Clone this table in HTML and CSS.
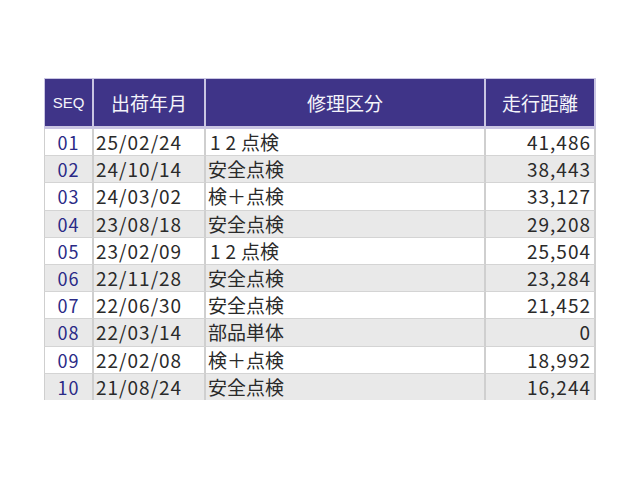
FILE: index.html
```html
<!DOCTYPE html>
<html lang="ja">
<head>
<meta charset="utf-8">
<link rel="stylesheet" href="styles.css">
</head>
<body>
<table class="list">
  <colgroup>
    <col class="c-seq"><col class="c-date"><col class="c-kind"><col class="c-dist">
  </colgroup>
  <thead>
    <tr>
      <th class="h-seq">SEQ</th>
      <th>出荷年月</th>
      <th>修理区分</th>
      <th>走行距離</th>
    </tr>
  </thead>
  <tbody>
    <tr><td class="seq">01</td><td class="date">25/02/24</td><td><span class="wide">12</span>点検</td><td class="num">41,486</td></tr>
    <tr class="alt"><td class="seq">02</td><td class="date">24/10/14</td><td>安全点検</td><td class="num">38,443</td></tr>
    <tr><td class="seq">03</td><td class="date">24/03/02</td><td>検＋点検</td><td class="num">33,127</td></tr>
    <tr class="alt"><td class="seq">04</td><td class="date">23/08/18</td><td>安全点検</td><td class="num">29,208</td></tr>
    <tr><td class="seq">05</td><td class="date">23/02/09</td><td><span class="wide">12</span>点検</td><td class="num">25,504</td></tr>
    <tr class="alt"><td class="seq">06</td><td class="date">22/11/28</td><td>安全点検</td><td class="num">23,284</td></tr>
    <tr><td class="seq">07</td><td class="date">22/06/30</td><td>安全点検</td><td class="num">21,452</td></tr>
    <tr class="alt"><td class="seq">08</td><td class="date">22/03/14</td><td>部品単体</td><td class="num">0</td></tr>
    <tr><td class="seq">09</td><td class="date">22/02/08</td><td>検＋点検</td><td class="num">18,992</td></tr>
    <tr class="alt"><td class="seq">10</td><td class="date">21/08/24</td><td>安全点検</td><td class="num">16,244</td></tr>
  </tbody>
</table>
</body>
</html>
```

FILE: styles.css
```css
html, body {
  margin: 0;
  padding: 0;
  background: #ffffff;
}
body {
  padding: 78px 0 0 44px;
  font-family: "Noto Sans CJK JP", "Noto Sans", sans-serif;
}
.list {
  border-collapse: separate;
  border-spacing: 0;
  table-layout: fixed;
  width: 552px;
}
.c-seq { width: 50px; }
.c-date { width: 112px; }
.c-kind { width: 280px; }
.c-dist { width: 110px; }

.list th {
  background: #3f3488;
  color: #f4f4fa;
  font-weight: normal;
  font-size: 19px;
  height: 47px;
  padding: 0;
  border-top: 1px solid #c9c5e2;
  border-right: 2px solid #c9c5e2;
  border-bottom: 3px solid #c9c5e2;
  text-align: center;
  vertical-align: middle;
}
.list th:first-child {
  border-left: 1px solid #c9c5e2;
}
.list th.h-seq {
  font-family: "Liberation Sans", "Noto Sans", sans-serif;
  font-size: 15px;
}
.list td {
  height: 26.2px;
  padding: 0 4px 0 2px;
  font-size: 19px;
  line-height: 26px;
  color: #2a2a2a;
  border-right: 2px solid #cfcfcf;
  border-bottom: 1px solid #d4d4d4;
  white-space: nowrap;
  overflow: hidden;
}
.list td:first-child {
  border-left: 1px solid #cfcfcf;
}
.list tr.alt td {
  background: #e9e9e9;
}
.list tr:last-child td {
  border-bottom: none;
}
.list td.seq {
  color: #2a2a86;
  text-align: center;
  font-size: 18px;
  letter-spacing: 1px;
  padding: 0;
}
.list td.date {
  letter-spacing: 1px;
}
.list td.num {
  text-align: right;
  letter-spacing: 1px;
  padding-right: 3px;
}
.wide {
  letter-spacing: 5px;
  padding-left: 2px;
}
```
